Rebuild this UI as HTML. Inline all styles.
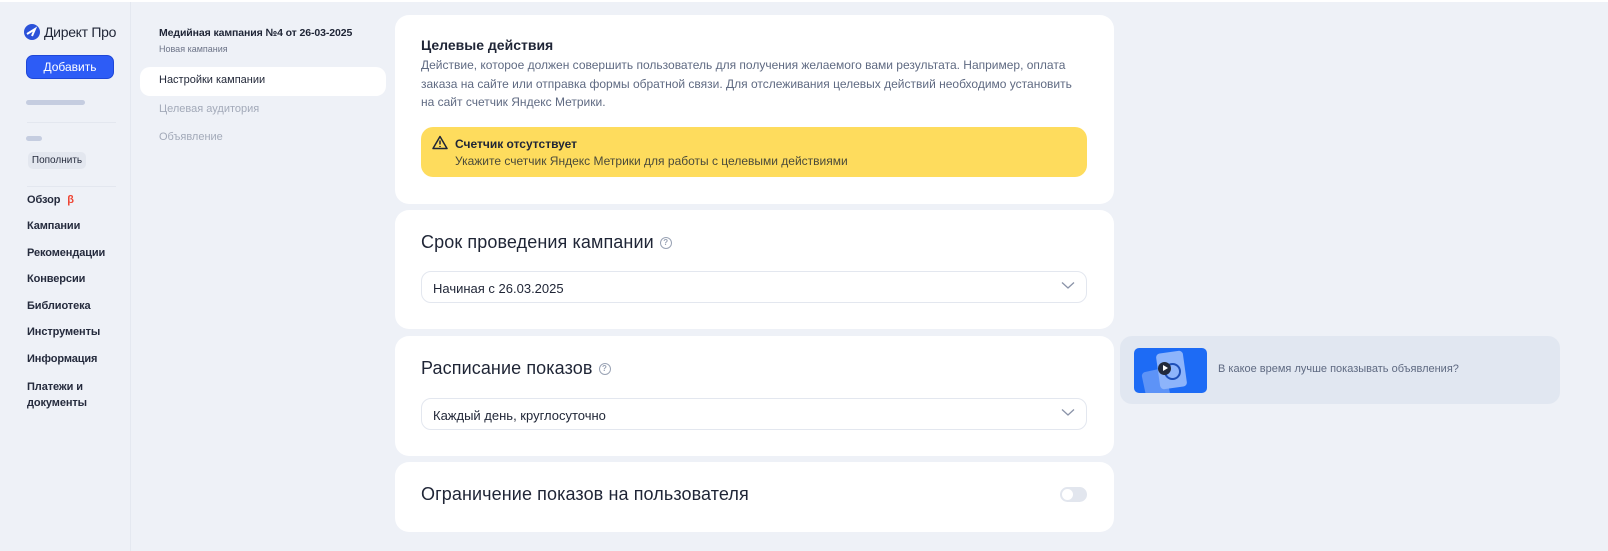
<!DOCTYPE html>
<html><head><meta charset="utf-8"><style>
*{box-sizing:border-box;margin:0;padding:0}
body{width:1608px;height:551px;background:#eef1f7;font-family:"Liberation Sans","Noto Sans CJK SC",sans-serif;color:#1f2536;position:relative;overflow:hidden}
.a{position:absolute}
.side{left:0;top:2px;width:131px;height:549px;border-right:1px solid #e4e8f0}
.nav{left:27px;font-size:11px;font-weight:bold;color:#252b3d;letter-spacing:-0.1px}
.card{position:absolute;left:395px;width:719px;background:#fff;border-radius:14px}
.h{font-size:18px;color:#1f2536;letter-spacing:0.1px}
.sel{position:absolute;left:26px;width:666px;height:32px;border:1px solid #e3e7ef;border-radius:10px;font-size:13px;padding:9px 11px}
.chev{position:absolute;right:11px;top:9px}
.q{display:inline-block;width:12px;height:12px;border:1.3px solid #9aa3b5;border-radius:50%;font-size:8px;color:#9aa3b5;text-align:center;line-height:10px;vertical-align:middle;margin-left:6px;font-weight:bold}
</style></head><body>
<div class="a" style="left:0;top:0;width:1608px;height:2px;background:#fff"></div>
<div class="a side"></div>
<svg class="a" style="left:24px;top:24px" width="16" height="16" viewBox="0 0 16 16"><circle cx="8" cy="8" r="8" fill="#2b52d9"/><path d="M3 10 L11 5 L8 12" stroke="#fff" stroke-width="2" fill="none"/></svg>
<div class="a" style="left:44px;top:24px;font-size:14px;color:#1f2536;letter-spacing:-0.3px">Директ Про</div>
<div class="a" style="left:26px;top:55px;width:88px;height:24px;background:#2d5cf6;border-radius:7px;color:#fff;font-size:12px;text-align:center;line-height:22px;border:1px solid #1e47d8">Добавить</div>
<div class="a" style="left:26px;top:100px;width:59px;height:5px;background:#c5cde0;border-radius:3px"></div>
<div class="a" style="left:27px;top:122px;width:89px;height:1px;background:#e3e7ef"></div>
<div class="a" style="left:26px;top:136px;width:16px;height:5px;background:#c5cde0;border-radius:3px"></div>
<div class="a" style="left:28px;top:152px;width:58px;height:17px;background:#e3e7ef;border-radius:5px;font-size:10px;text-align:center;line-height:17px;color:#252b3d">Пополнить</div>
<div class="a" style="left:27px;top:186px;width:89px;height:1px;background:#e3e7ef"></div>
<div class="a nav" style="top:194px">Обзор <span style="color:#e43;margin-left:4px">β</span></div>
<div class="a nav" style="top:220px">Кампании</div>
<div class="a nav" style="top:247px">Рекомендации</div>
<div class="a nav" style="top:273px">Конверсии</div>
<div class="a nav" style="top:300px">Библиотека</div>
<div class="a nav" style="top:326px">Инструменты</div>
<div class="a nav" style="top:353px">Информация</div>
<div class="a nav" style="top:379px;line-height:16px">Платежи и<br>документы</div>

<div class="a" style="left:159px;top:27px;font-size:10.5px;font-weight:bold;color:#1f2536;letter-spacing:-0.1px">Медийная кампания №4 от 26-03-2025</div>
<div class="a" style="left:159px;top:44px;font-size:9px;color:#6d7488">Новая кампания</div>
<div class="a" style="left:140px;top:67px;width:246px;height:29px;background:#fff;border-radius:10px;font-size:11px;padding:7px 19px;color:#1f2536">Настройки кампании</div>
<div class="a" style="left:159px;top:103px;font-size:11px;color:#a3aab9">Целевая аудитория</div>
<div class="a" style="left:159px;top:131px;font-size:11px;color:#a3aab9">Объявление</div>

<div class="card" style="top:15px;height:189px">
 <div class="a" style="left:26px;top:22px;font-size:14px;font-weight:bold">Целевые действия</div>
 <div class="a" style="left:26px;top:41px;width:680px;font-size:12px;line-height:18.5px;color:#5f6a82">Действие, которое должен совершить пользователь для получения желаемого вами результата. Например, оплата<br>заказа на сайте или отправка формы обратной связи. Для отслеживания целевых действий необходимо установить<br>на сайт счетчик Яндекс Метрики.</div>
 <div class="a" style="left:26px;top:112px;width:666px;height:50px;background:#fedc5d;border-radius:12px">
  <svg class="a" style="left:11px;top:8px" width="16" height="15" viewBox="0 0 16 15"><path d="M8 1.5 L15 13.5 H1 Z" fill="none" stroke="#1f2536" stroke-width="1.5" stroke-linejoin="round"/><path d="M8 5.5v4M8 11v1" stroke="#1f2536" stroke-width="1.5"/></svg>
  <div class="a" style="left:34px;top:10px;font-size:12px;font-weight:bold">Счетчик отсутствует</div>
  <div class="a" style="left:34px;top:27px;font-size:12px;color:#4a4a3a">Укажите счетчик Яндекс Метрики для работы с целевыми действиями</div>
 </div>
</div>
<div class="card" style="top:210px;height:119px">
 <div class="a h" style="left:26px;top:22px">Срок проведения кампании<span class="q">?</span></div>
 <div class="sel" style="top:61px">Начиная с 26.03.2025<svg class="chev" width="14" height="9" viewBox="0 0 14 9"><path d="M1 1.5 L7 7 L13 1.5" fill="none" stroke="#8a93a8" stroke-width="1.3"/></svg></div>
</div>
<div class="card" style="top:336px;height:120px">
 <div class="a h" style="left:26px;top:22px">Расписание показов<span class="q">?</span></div>
 <div class="sel" style="top:62px">Каждый день, круглосуточно<svg class="chev" width="14" height="9" viewBox="0 0 14 9"><path d="M1 1.5 L7 7 L13 1.5" fill="none" stroke="#8a93a8" stroke-width="1.3"/></svg></div>
</div>
<div class="card" style="top:462px;height:70px">
 <div class="a h" style="left:26px;top:22px">Ограничение показов на пользователя</div>
 <div class="a" style="left:665px;top:25px;width:27px;height:15px;background:#e2e6ee;border-radius:8px"><div class="a" style="left:2px;top:2px;width:11px;height:11px;background:#fff;border-radius:50%"></div></div>
</div>

<div class="a" style="left:1120px;top:336px;width:440px;height:68px;background:#e1e7f1;border-radius:12px">
 <div class="a" style="left:14px;top:12px;width:73px;height:45px;background:#1d6bf5;border-radius:5px;overflow:hidden">
  <div class="a" style="left:10px;top:22px;width:24px;height:30px;background:#5d93f7;border-radius:4px;transform:rotate(-12deg)"></div>
  <div class="a" style="left:24px;top:4px;width:27px;height:36px;background:#8db4fb;border-radius:4px;transform:rotate(-8deg)"></div>
  <div class="a" style="left:30px;top:15px;width:17px;height:17px;border:2px solid #1d4fb8;border-radius:50%"></div>
  <div class="a" style="left:24px;top:14px;width:13px;height:13px;background:#222a3c;border-radius:50%"></div>
  <div class="a" style="left:29px;top:17px;width:0;height:0;border-left:5px solid #fff;border-top:3.5px solid transparent;border-bottom:3.5px solid transparent"></div>
 </div>
 <div class="a" style="left:98px;top:27px;font-size:11px;color:#5f6a82">В какое время лучше показывать объявления?</div>
</div>
</body></html>
